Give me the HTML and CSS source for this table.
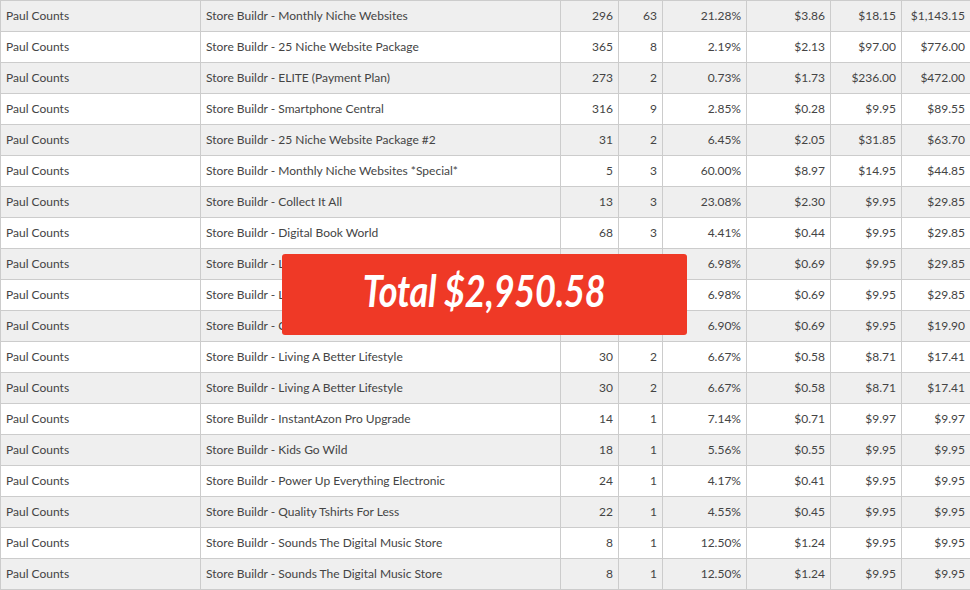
FILE: index.html
```html
<!DOCTYPE html>
<html>
<head>
<meta charset="utf-8">
<link rel="stylesheet" href="styles.css">
</head>
<body>
<div class="wrap">
<table class="sales">
<colgroup>
<col class="c-name"><col class="c-prod"><col class="c-a"><col class="c-b"><col class="c-c"><col class="c-d"><col class="c-e"><col class="c-f">
</colgroup>
<tbody>
<tr><td>Paul Counts</td><td>Store Buildr - Monthly Niche Websites</td><td class="n">296</td><td class="n">63</td><td class="n">21.28%</td><td class="n">$3.86</td><td class="n">$18.15</td><td class="n">$1,143.15</td></tr>
<tr><td>Paul Counts</td><td>Store Buildr - 25 Niche Website Package</td><td class="n">365</td><td class="n">8</td><td class="n">2.19%</td><td class="n">$2.13</td><td class="n">$97.00</td><td class="n">$776.00</td></tr>
<tr><td>Paul Counts</td><td>Store Buildr - ELITE (Payment Plan)</td><td class="n">273</td><td class="n">2</td><td class="n">0.73%</td><td class="n">$1.73</td><td class="n">$236.00</td><td class="n">$472.00</td></tr>
<tr><td>Paul Counts</td><td>Store Buildr - Smartphone Central</td><td class="n">316</td><td class="n">9</td><td class="n">2.85%</td><td class="n">$0.28</td><td class="n">$9.95</td><td class="n">$89.55</td></tr>
<tr><td>Paul Counts</td><td>Store Buildr - 25 Niche Website Package #2</td><td class="n">31</td><td class="n">2</td><td class="n">6.45%</td><td class="n">$2.05</td><td class="n">$31.85</td><td class="n">$63.70</td></tr>
<tr><td>Paul Counts</td><td>Store Buildr - Monthly Niche Websites *Special*</td><td class="n">5</td><td class="n">3</td><td class="n">60.00%</td><td class="n">$8.97</td><td class="n">$14.95</td><td class="n">$44.85</td></tr>
<tr><td>Paul Counts</td><td>Store Buildr - Collect It All</td><td class="n">13</td><td class="n">3</td><td class="n">23.08%</td><td class="n">$2.30</td><td class="n">$9.95</td><td class="n">$29.85</td></tr>
<tr><td>Paul Counts</td><td>Store Buildr - Digital Book World</td><td class="n">68</td><td class="n">3</td><td class="n">4.41%</td><td class="n">$0.44</td><td class="n">$9.95</td><td class="n">$29.85</td></tr>
<tr><td>Paul Counts</td><td>Store Buildr - Living A Better Lifestyle</td><td class="n">43</td><td class="n">3</td><td class="n">6.98%</td><td class="n">$0.69</td><td class="n">$9.95</td><td class="n">$29.85</td></tr>
<tr><td>Paul Counts</td><td>Store Buildr - Living A Better Lifestyle</td><td class="n">43</td><td class="n">3</td><td class="n">6.98%</td><td class="n">$0.69</td><td class="n">$9.95</td><td class="n">$29.85</td></tr>
<tr><td>Paul Counts</td><td>Store Buildr - Collect It All</td><td class="n">29</td><td class="n">2</td><td class="n">6.90%</td><td class="n">$0.69</td><td class="n">$9.95</td><td class="n">$19.90</td></tr>
<tr><td>Paul Counts</td><td>Store Buildr - Living A Better Lifestyle</td><td class="n">30</td><td class="n">2</td><td class="n">6.67%</td><td class="n">$0.58</td><td class="n">$8.71</td><td class="n">$17.41</td></tr>
<tr><td>Paul Counts</td><td>Store Buildr - Living A Better Lifestyle</td><td class="n">30</td><td class="n">2</td><td class="n">6.67%</td><td class="n">$0.58</td><td class="n">$8.71</td><td class="n">$17.41</td></tr>
<tr><td>Paul Counts</td><td>Store Buildr - InstantAzon Pro Upgrade</td><td class="n">14</td><td class="n">1</td><td class="n">7.14%</td><td class="n">$0.71</td><td class="n">$9.97</td><td class="n">$9.97</td></tr>
<tr><td>Paul Counts</td><td>Store Buildr - Kids Go Wild</td><td class="n">18</td><td class="n">1</td><td class="n">5.56%</td><td class="n">$0.55</td><td class="n">$9.95</td><td class="n">$9.95</td></tr>
<tr><td>Paul Counts</td><td>Store Buildr - Power Up Everything Electronic</td><td class="n">24</td><td class="n">1</td><td class="n">4.17%</td><td class="n">$0.41</td><td class="n">$9.95</td><td class="n">$9.95</td></tr>
<tr><td>Paul Counts</td><td>Store Buildr - Quality Tshirts For Less</td><td class="n">22</td><td class="n">1</td><td class="n">4.55%</td><td class="n">$0.45</td><td class="n">$9.95</td><td class="n">$9.95</td></tr>
<tr><td>Paul Counts</td><td>Store Buildr - Sounds The Digital Music Store</td><td class="n">8</td><td class="n">1</td><td class="n">12.50%</td><td class="n">$1.24</td><td class="n">$9.95</td><td class="n">$9.95</td></tr>
<tr><td>Paul Counts</td><td>Store Buildr - Sounds The Digital Music Store</td><td class="n">8</td><td class="n">1</td><td class="n">12.50%</td><td class="n">$1.24</td><td class="n">$9.95</td><td class="n">$9.95</td></tr>
</tbody>
</table>
<div class="total"><span class="total-text">Total $2,950.58</span></div>
</div>
</body>
</html>
```
FILE: styles.css
```css
html, body {
  margin: 0;
  padding: 0;
  background: #ffffff;
}
.wrap {
  position: relative;
  width: 970px;
  height: 590px;
  overflow: hidden;
}
.sales {
  width: 970px;
  table-layout: fixed;
  border-collapse: collapse;
  font-family: Lato, "Liberation Sans", sans-serif;
  font-size: 12px;
  color: #444444;
}
.c-name { width: 200px; }
.c-prod { width: 360px; }
.c-a { width: 58px; }
.c-b { width: 44px; }
.c-c { width: 84px; }
.c-d { width: 84px; }
.c-e { width: 71px; }
.c-f { width: 69px; }
.sales td {
  border: 1px solid #cccccc;
  height: 30px;
  padding: 0 5px 2px 5px;
  box-sizing: border-box;
  white-space: nowrap;
  overflow: hidden;
}
.sales tr {
  height: 31px;
}
.sales tr:nth-child(odd) td {
  background: #efefef;
}
.sales tr:nth-child(even) td {
  background: #ffffff;
}
.sales td.n {
  text-align: right;
}
.total {
  position: absolute;
  left: 282px;
  top: 254px;
  width: 405px;
  height: 81px;
  box-sizing: border-box;
  padding-bottom: 10px;
  background: #ef3926;
  border-radius: 3px;
  display: flex;
  align-items: center;
  justify-content: center;
}
.total-text {
  font-family: Lato, "Open Sans", sans-serif;
  font-weight: 700;
  font-style: italic;
  font-size: 44px;
  line-height: 1;
  color: #ffffff;
  display: inline-block;
  transform: scaleX(0.82);
  letter-spacing: -0.3px;
}
```
